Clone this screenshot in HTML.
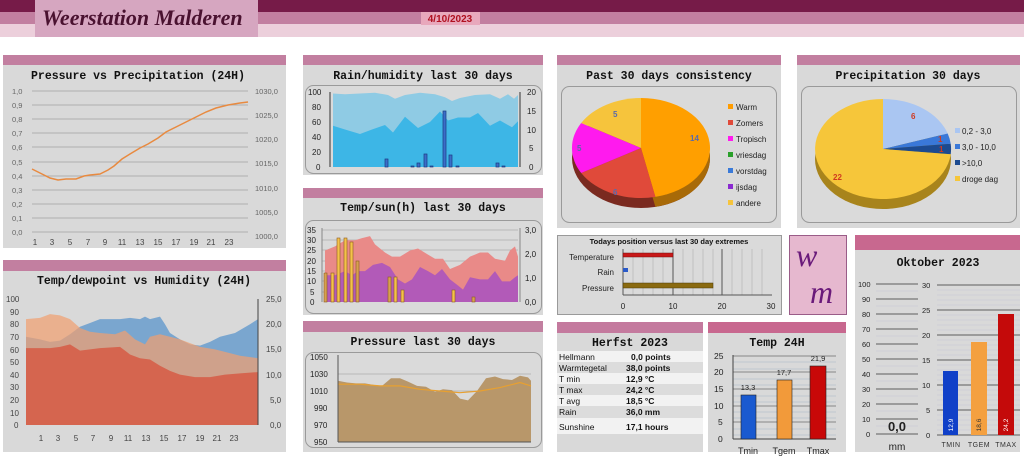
<!DOCTYPE html>
<html><head><meta charset="utf-8">
<style>
body{margin:0;width:1024px;height:456px;overflow:hidden;background:#fff;font-family:"Liberation Sans",sans-serif}
svg{position:absolute;left:0;top:0}
</style></head><body>
<svg width="1024" height="456" viewBox="0 0 1024 456" xmlns="http://www.w3.org/2000/svg" font-family="Liberation Sans, sans-serif">
<rect x="0" y="0" width="1024" height="12" fill="#761b48"/>
<rect x="0" y="12" width="1024" height="12" fill="#c27fa0"/>
<rect x="0" y="24" width="1024" height="13" fill="#eccfdb"/>
<rect x="35" y="0" width="223" height="37" fill="#d6a6c0"/>
<text x="42" y="25" font-family="Liberation Serif, serif" font-style="italic" font-weight="bold" font-size="22" fill="#4a1230">Weerstation Malderen</text>
<rect x="421" y="12" width="59" height="13" fill="#e8a8bc"/>
<text x="450" y="22" font-size="10" font-weight="bold" fill="#b01020" text-anchor="middle">4/10/2023</text>

<g font-family="Liberation Mono, monospace" font-weight="bold" font-size="11.5" fill="#111" text-anchor="middle">
<rect x="3" y="55" width="283" height="193" fill="#d9d9d9"/><rect x="3" y="55" width="283" height="10" fill="#c27fa0"/>
<text x="138" y="79">Pressure vs Precipitation (24H)</text>
<rect x="3" y="260" width="283" height="192" fill="#d9d9d9"/><rect x="3" y="260" width="283" height="11" fill="#c27fa0"/>
<text x="144" y="284">Temp/dewpoint vs Humidity (24H)</text>
<rect x="303" y="55" width="240" height="120" fill="#d9d9d9"/><rect x="303" y="55" width="240" height="10" fill="#c27fa0"/>
<text x="423" y="79">Rain/humidity last 30 days</text>
<rect x="303" y="188" width="240" height="127" fill="#d9d9d9"/><rect x="303" y="188" width="240" height="10" fill="#c27fa0"/>
<text x="423" y="211">Temp/sun(h) last 30 days</text>
<rect x="303" y="321" width="240" height="131" fill="#d9d9d9"/><rect x="303" y="321" width="240" height="11" fill="#c27fa0"/>
<text x="423" y="345">Pressure last 30 days</text>
<rect x="557" y="55" width="224" height="173" fill="#d9d9d9"/><rect x="557" y="55" width="224" height="10" fill="#c27fa0"/>
<text x="669" y="79">Past 30 days consistency</text>
<rect x="797" y="55" width="223" height="173" fill="#d9d9d9"/><rect x="797" y="55" width="223" height="10" fill="#c27fa0"/>
<text x="908" y="79">Precipitation 30 days</text>
<rect x="557" y="322" width="146" height="130" fill="#d9d9d9"/><rect x="557" y="322" width="146" height="11" fill="#c47a9e"/>
<text x="630" y="346">Herfst 2023</text>
<rect x="708" y="322" width="138" height="130" fill="#d9d9d9"/><rect x="708" y="322" width="138" height="11" fill="#c8688f"/>
<text x="777" y="346">Temp 24H</text>
<rect x="855" y="235" width="165" height="217" fill="#d9d9d9"/><rect x="855" y="235" width="165" height="15" fill="#c8688f"/>
<text x="938" y="266">Oktober 2023</text>
</g>

<g fill="#dadada" stroke="#9a9a9a" stroke-width="1">
<rect x="305.5" y="85.5" width="236" height="88" rx="8"/>
<rect x="305.5" y="220.5" width="236" height="93" rx="8"/>
<rect x="305.5" y="352.5" width="236" height="95" rx="8"/>
<rect x="561.5" y="86.5" width="215" height="136" rx="8"/>
<rect x="801.5" y="86.5" width="215" height="136" rx="8"/>
<rect x="557.5" y="235.5" width="224" height="79"/>
</g>
<rect x="789.5" y="235.5" width="57" height="79" fill="#e6b8cf" stroke="#9a5c88"/>
<text x="796" y="266" font-family="Liberation Serif, serif" font-style="italic" font-size="32" fill="#6a1a7a">w</text>
<text x="810" y="303" font-family="Liberation Serif, serif" font-style="italic" font-size="32" fill="#6a1a7a">m</text>

<!-- Panel 1 -->
<g stroke="#b0b0b0" stroke-width="1">
<line x1="32" y1="91" x2="248" y2="91"/><line x1="32" y1="105" x2="248" y2="105"/><line x1="32" y1="119" x2="248" y2="119"/><line x1="32" y1="133" x2="248" y2="133"/><line x1="32" y1="147" x2="248" y2="147"/><line x1="32" y1="162" x2="248" y2="162"/><line x1="32" y1="176" x2="248" y2="176"/><line x1="32" y1="190" x2="248" y2="190"/><line x1="32" y1="204" x2="248" y2="204"/><line x1="32" y1="218" x2="248" y2="218"/><line x1="32" y1="232" x2="248" y2="232"/>
</g>
<g font-size="7.5" fill="#666">
<text x="12" y="94">1,0</text><text x="12" y="108">0,9</text><text x="12" y="122">0,8</text><text x="12" y="136">0,7</text><text x="12" y="150">0,6</text><text x="12" y="165">0,5</text><text x="12" y="179">0,4</text><text x="12" y="193">0,3</text><text x="12" y="207">0,2</text><text x="12" y="221">0,1</text><text x="12" y="235">0,0</text>
<text x="255" y="94">1030,0</text><text x="255" y="118">1025,0</text><text x="255" y="142">1020,0</text><text x="255" y="166">1015,0</text><text x="255" y="191">1010,0</text><text x="255" y="215">1005,0</text><text x="255" y="239">1000,0</text>
</g>
<g font-size="8" fill="#444" text-anchor="middle">
<text x="35" y="245">1</text><text x="52" y="245">3</text><text x="70" y="245">5</text><text x="88" y="245">7</text><text x="105" y="245">9</text><text x="122" y="245">11</text><text x="140" y="245">13</text><text x="158" y="245">15</text><text x="176" y="245">17</text><text x="194" y="245">19</text><text x="211" y="245">21</text><text x="229" y="245">23</text>
</g>
<polyline fill="none" stroke="#e88a40" stroke-width="1.5" points="32,169 42,174 50,178 58,180 66,179 76,179 84,176 90,175 100,174 108,170 114,166 122,159 130,154 140,148 148,144 158,138 166,132 176,127 186,122 196,117 206,112 216,108 228,105 240,103 248,102"/>

<!-- Panel 5 -->
<g transform="translate(0,425) scale(1,-1.26)">
<polygon fill="#7aa6cf" points="26,0 26,70 40,68 50,66 60,67 70,72 80,78 90,81 100,84 110,84 120,84 130,85 140,84 145,86 150,84 160,86 165,80 170,73 180,68 190,64 200,63 210,66 220,70 235,73 250,80 258,84 258,0"/>
<polygon fill="#f0a070" fill-opacity="0.72" points="26,0 26,84 40,85 50,88 60,87 70,84 80,77 90,74 100,73 115,72 125,75 135,68 145,64 150,70 160,72 170,70 180,68 190,65 200,62 215,60 225,58 240,55 258,53 258,0"/>
<polygon fill="#d5654f" points="26,0 26,61 50,61 60,62 70,64 80,59 100,61 120,62 130,56 140,53 150,52 160,47 170,43 180,40 195,38 210,38 225,40 240,41 258,42 258,0"/>
</g>
<line x1="258" y1="299" x2="258" y2="425" stroke="#444"/>
<g font-size="8" fill="#444">
<text x="6" y="302">100</text><text x="10" y="315">90</text><text x="10" y="327">80</text><text x="10" y="340">70</text><text x="10" y="353">60</text><text x="10" y="365">50</text><text x="10" y="378">40</text><text x="10" y="390">30</text><text x="10" y="403">20</text><text x="10" y="416">10</text><text x="14" y="428">0</text>
<text x="266" y="302">25,0</text><text x="266" y="327">20,0</text><text x="266" y="352">15,0</text><text x="266" y="378">10,0</text><text x="270" y="403">5,0</text><text x="270" y="428">0,0</text>
</g>
<g font-size="8" fill="#444" text-anchor="middle">
<text x="41" y="441">1</text><text x="58" y="441">3</text><text x="76" y="441">5</text><text x="93" y="441">7</text><text x="111" y="441">9</text><text x="128" y="441">11</text><text x="146" y="441">13</text><text x="164" y="441">15</text><text x="182" y="441">17</text><text x="200" y="441">19</text><text x="217" y="441">21</text><text x="234" y="441">23</text>
</g>

<!-- Panel 2 -->
<g transform="translate(0,167) scale(1,-0.75)">
<polygon fill="#8fcbe4" points="333,0 333,98 345,97 360,98 375,99 388,96 395,91 405,96 420,99 435,97 445,93 452,88 460,92 475,96 490,97 500,91 508,97 514,91 518,96 518,0"/>
<polygon fill="#3db6e6" points="333,0 333,55 345,50 360,44 372,50 385,56 393,46 405,67 418,52 430,60 440,74 448,62 458,66 470,66 478,72 490,55 500,62 512,53 518,61 518,0"/>
</g>
<g fill="#3a6ec8" stroke="#1c3a80" stroke-width="0.7">
<rect x="385" y="159" width="3" height="8"/><rect x="411" y="166" width="3" height="1"/><rect x="417" y="163" width="3" height="4"/><rect x="424" y="154" width="3" height="13"/><rect x="430" y="166" width="3" height="1"/><rect x="443" y="111" width="3" height="56"/><rect x="449" y="155" width="3" height="12"/><rect x="456" y="166" width="3" height="1"/><rect x="496" y="163" width="3" height="4"/><rect x="502" y="166" width="3" height="1"/>
</g>
<line x1="330" y1="92" x2="330" y2="167" stroke="#333"/><line x1="520" y1="92" x2="520" y2="167" stroke="#333"/>
<g font-size="8" fill="#222">
<text x="308" y="95">100</text><text x="312" y="110">80</text><text x="312" y="125">60</text><text x="312" y="140">40</text><text x="312" y="155">20</text><text x="316" y="170">0</text>
<text x="527" y="95">20</text><text x="527" y="114">15</text><text x="527" y="133">10</text><text x="529" y="151">5</text><text x="529" y="170">0</text>
</g>

<!-- Panel 3 -->
<g stroke="#b8b8b8"><line x1="322" y1="230" x2="518" y2="230"/><line x1="322" y1="240" x2="518" y2="240"/><line x1="322" y1="250" x2="518" y2="250"/><line x1="322" y1="261" x2="518" y2="261"/><line x1="322" y1="271" x2="518" y2="271"/><line x1="322" y1="281" x2="518" y2="281"/><line x1="322" y1="292" x2="518" y2="292"/></g>
<g transform="translate(0,302) scale(1,-2.06)">
<polygon fill="#e98a88" points="325,0 325,25 335,27 345,30 355,30 362,31 370,32 375,28 385,24 392,22 400,22 410,25 418,26 428,23 435,21 443,21 450,16 460,18 470,22 480,24 488,24 495,21 505,20 510,25 515,27 518,22 518,0"/>
<polygon fill="#b25ab8" points="325,0 325,13 335,13 345,15 352,13 358,15 365,15 373,18 382,19 390,17 398,11 405,9 412,11 420,17 428,15 435,13 442,16 450,11 458,8 463,6 470,12 480,11 488,11 495,15 502,10 510,10 515,12 518,13 518,0"/>
</g>
<g fill="#f5c24a" stroke="#8a5a20" stroke-width="0.6">
<rect x="324" y="273" width="3" height="29" fill="#d8a050"/><rect x="331" y="273" width="3" height="29"/><rect x="337" y="238" width="3" height="64"/><rect x="344" y="238" width="3" height="64"/><rect x="350" y="242" width="3" height="60"/><rect x="356" y="261" width="3" height="41" fill="#d8a050"/><rect x="388" y="277" width="3" height="25" fill="#d8a050"/><rect x="394" y="277" width="3" height="25"/><rect x="401" y="290" width="3" height="12"/><rect x="452" y="290" width="3" height="12"/><rect x="472" y="297" width="3" height="5" fill="#d8a050"/>
</g>
<line x1="322" y1="228" x2="322" y2="302" stroke="#888"/><line x1="520" y1="228" x2="520" y2="302" stroke="#888"/>
<g font-size="8" fill="#222">
<text x="307" y="233">35</text><text x="307" y="243">30</text><text x="307" y="253">25</text><text x="307" y="264">20</text><text x="307" y="274">15</text><text x="307" y="284">10</text><text x="310" y="295">5</text><text x="310" y="305">0</text>
<text x="525" y="233">3,0</text><text x="525" y="257">2,0</text><text x="525" y="281">1,0</text><text x="525" y="305">0,0</text>
</g>

<!-- Panel 4 -->
<g stroke="#b8b8b8"><line x1="338" y1="374" x2="531" y2="374"/><line x1="338" y1="391" x2="531" y2="391"/><line x1="338" y1="408" x2="531" y2="408"/><line x1="338" y1="425" x2="531" y2="425"/></g>
<g transform="translate(0,442) scale(1,-0.85)">
<polygon fill="#b8976a" points="338,0 338,72 347,70 356,69 365,69 374,67 382,66 391,75 400,75 408,71 417,66 426,65 435,59 443,62 452,61 460,51 468,49 477,60 486,75 495,77 503,74 512,73 520,78 528,76 531,72 531,0"/>
<polyline fill="none" stroke="#e8a030" stroke-width="1.2" vector-effect="non-scaling-stroke" points="338,68 360,68 380,66 400,66 420,62 440,60 460,58 480,60 500,64 520,70 531,66"/>
</g>
<line x1="338" y1="355" x2="338" y2="442" stroke="#555"/><line x1="338" y1="442" x2="531" y2="442" stroke="#555"/>
<g font-size="8" fill="#222">
<text x="310" y="360">1050</text><text x="310" y="377">1030</text><text x="310" y="394">1010</text><text x="314" y="411">990</text><text x="314" y="428">970</text><text x="314" y="445">950</text>
</g>

<!-- Past 30 pie -->
<ellipse cx="641" cy="158" rx="69" ry="50" fill="#7a2a20"/>
<path d="M641,158 L641,108 A69,50 0 0 1 655.4,206.9 Z" fill="#a86a08"/>
<path d="M641,148 L641,98 A69,50 0 0 1 655.4,196.9 Z" fill="#ff9f00"/>
<path d="M641,148 L655.4,196.9 A69,50 0 0 1 581.2,173 Z" fill="#e04a3a"/>
<path d="M641,148 L581.2,173 A69,50 0 0 1 581.2,123 Z" fill="#ff1aee"/>
<path d="M641,148 L581.2,123 A69,50 0 0 1 641,98 Z" fill="#f6c43c"/>
<g font-size="8" font-weight="bold" fill="#5a6aaa">
<text x="613" y="117">5</text><text x="690" y="141">14</text><text x="577" y="151">5</text><text x="613" y="195">6</text>
</g>
<g font-size="8" fill="#222">
<rect x="728" y="104" width="5" height="5" fill="#ff9c00"/><text x="736" y="110">Warm</text>
<rect x="728" y="120" width="5" height="5" fill="#e04a3a"/><text x="736" y="126">Zomers</text>
<rect x="728" y="136" width="5" height="5" fill="#ff1aee"/><text x="736" y="142">Tropisch</text>
<rect x="728" y="152" width="5" height="5" fill="#2aa02a"/><text x="736" y="158">vriesdag</text>
<rect x="728" y="168" width="5" height="5" fill="#3a7ad8"/><text x="736" y="174">vorstdag</text>
<rect x="728" y="184" width="5" height="5" fill="#8a2ad0"/><text x="736" y="190">ijsdag</text>
<rect x="728" y="200" width="5" height="5" fill="#f6c43c"/><text x="736" y="206">andere</text>
</g>

<!-- Precip pie -->
<ellipse cx="883" cy="159" rx="68" ry="50" fill="#a8841c"/>
<path d="M883,149 L883,99 A68,50 0 0 1 947.7,133.5 Z" fill="#aac6f2"/>
<path d="M883,149 L947.7,133.5 A68,50 0 0 1 950.7,143.8 Z" fill="#3a78d8"/>
<path d="M883,149 L950.7,143.8 A68,50 0 0 1 950.7,154.2 Z" fill="#1c4a90"/>
<path d="M883,149 L950.7,154.2 A68,50 0 1 1 883,99 Z" fill="#f6c63a"/>
<g font-size="8" font-weight="bold" fill="#d03a20">
<text x="911" y="119">6</text><text x="938" y="142">1</text><text x="939" y="152">1</text><text x="833" y="180">22</text>
</g>
<g font-size="8" fill="#222">
<rect x="955" y="128" width="5" height="5" fill="#aac6f2"/><text x="962" y="134">0,2 - 3,0</text>
<rect x="955" y="144" width="5" height="5" fill="#3a78d8"/><text x="962" y="150">3,0 - 10,0</text>
<rect x="955" y="160" width="5" height="5" fill="#1c4a90"/><text x="962" y="166">&gt;10,0</text>
<rect x="955" y="176" width="5" height="5" fill="#f6c63a"/><text x="962" y="182">droge dag</text>
</g>

<!-- Todays -->
<text x="669" y="244" font-size="7.5" font-weight="bold" fill="#111" text-anchor="middle">Todays position versus last 30 day extremes</text>
<g stroke="#c0c0c0"><line x1="633" y1="249" x2="633" y2="295"/><line x1="643" y1="249" x2="643" y2="295"/><line x1="653" y1="249" x2="653" y2="295"/><line x1="663" y1="249" x2="663" y2="295"/><line x1="683" y1="249" x2="683" y2="295"/><line x1="693" y1="249" x2="693" y2="295"/><line x1="703" y1="249" x2="703" y2="295"/><line x1="713" y1="249" x2="713" y2="295"/><line x1="732" y1="249" x2="732" y2="295"/><line x1="742" y1="249" x2="742" y2="295"/><line x1="752" y1="249" x2="752" y2="295"/><line x1="762" y1="249" x2="762" y2="295"/></g>
<g stroke="#555"><line x1="623" y1="249" x2="623" y2="295"/><line x1="673" y1="249" x2="673" y2="295"/><line x1="722" y1="249" x2="722" y2="295"/><line x1="623" y1="295" x2="772" y2="295"/></g>
<rect x="623" y="253" width="50" height="4" fill="#c81818" stroke="#701010" stroke-width="0.5"/>
<rect x="623" y="268" width="5" height="4" fill="#2a5ac8"/>
<rect x="623" y="283" width="90" height="5" fill="#8a6a10" stroke="#4a3a08" stroke-width="0.5"/>
<g font-size="8" fill="#222" text-anchor="end"><text x="614" y="260">Temperature</text><text x="614" y="275">Rain</text><text x="614" y="291">Pressure</text></g>
<g font-size="8" fill="#222" text-anchor="middle"><text x="623" y="309">0</text><text x="673" y="309">10</text><text x="722" y="309">20</text><text x="771" y="309">30</text></g>

<!-- Herfst -->
<rect x="557" y="351" width="146" height="11" fill="#f2f2f2"/><rect x="557" y="362" width="146" height="11" fill="#dcdcdc"/><rect x="557" y="373" width="146" height="11" fill="#f2f2f2"/><rect x="557" y="384" width="146" height="11" fill="#dcdcdc"/><rect x="557" y="395" width="146" height="11" fill="#f2f2f2"/><rect x="557" y="406" width="146" height="12" fill="#dcdcdc"/><rect x="557" y="418" width="146" height="16" fill="#f2f2f2"/>
<g font-size="8.5" fill="#111">
<text x="559" y="360">Hellmann</text><text x="559" y="371">Warmtegetal</text><text x="559" y="382">T min</text><text x="559" y="393">T max</text><text x="559" y="404">T avg</text><text x="559" y="415">Rain</text><text x="559" y="430">Sunshine</text>
</g>
<g font-size="8.5" font-weight="bold" fill="#111">
<text x="631" y="360">0,0 points</text><text x="626" y="371">38,0 points</text><text x="626" y="382">12,9 °C</text><text x="626" y="393">24,2 °C</text><text x="626" y="404">18,5 °C</text><text x="626" y="415">36,0 mm</text><text x="626" y="430">17,1 hours</text>
</g>

<!-- Temp 24H -->
<g stroke="#a8b4c8" stroke-width="0.6">
<line x1="733" y1="362" x2="836" y2="362"/><line x1="733" y1="369" x2="836" y2="369"/><line x1="733" y1="379" x2="836" y2="379"/><line x1="733" y1="385" x2="836" y2="385"/><line x1="733" y1="396" x2="836" y2="396"/><line x1="733" y1="402" x2="836" y2="402"/><line x1="733" y1="412" x2="836" y2="412"/><line x1="733" y1="418" x2="836" y2="418"/><line x1="733" y1="429" x2="836" y2="429"/><line x1="733" y1="435" x2="836" y2="435"/>
</g>
<g stroke="#888"><line x1="733" y1="356" x2="836" y2="356"/><line x1="733" y1="372" x2="836" y2="372"/><line x1="733" y1="389" x2="836" y2="389"/><line x1="733" y1="406" x2="836" y2="406"/><line x1="733" y1="422" x2="836" y2="422"/></g>
<line x1="733" y1="355" x2="733" y2="439" stroke="#444"/><line x1="733" y1="439" x2="836" y2="439" stroke="#444"/>
<rect x="741" y="395" width="15" height="44" fill="#1a5ad0" stroke="#222" stroke-width="0.6"/>
<rect x="777" y="380" width="15" height="59" fill="#f29a3a" stroke="#222" stroke-width="0.6"/>
<rect x="810" y="366" width="16" height="73" fill="#c80808" stroke="#222" stroke-width="0.6"/>
<g font-size="7.5" fill="#222" text-anchor="middle"><text x="748" y="390">13,3</text><text x="784" y="375">17,7</text><text x="818" y="361">21,9</text></g>
<g font-size="8.5" fill="#222"><text x="714" y="359">25</text><text x="714" y="375">20</text><text x="714" y="392">15</text><text x="714" y="409">10</text><text x="718" y="425">5</text><text x="718" y="442">0</text></g>
<g font-size="9" fill="#222" text-anchor="middle"><text x="748" y="454">Tmin</text><text x="784" y="454">Tgem</text><text x="818" y="454">Tmax</text></g>

<!-- Oktober -->
<g stroke="#c4c8d4" stroke-width="0.6">
<line x1="876" y1="291" x2="918" y2="291"/><line x1="876" y1="306" x2="918" y2="306"/><line x1="876" y1="321" x2="918" y2="321"/><line x1="876" y1="336" x2="918" y2="336"/><line x1="876" y1="351" x2="918" y2="351"/><line x1="876" y1="366" x2="918" y2="366"/><line x1="876" y1="381" x2="918" y2="381"/><line x1="876" y1="396" x2="918" y2="396"/><line x1="876" y1="411" x2="918" y2="411"/><line x1="876" y1="426" x2="918" y2="426"/>
<line x1="937" y1="290" x2="1020" y2="290"/><line x1="937" y1="295" x2="1020" y2="295"/><line x1="937" y1="300" x2="1020" y2="300"/><line x1="937" y1="305" x2="1020" y2="305"/><line x1="937" y1="315" x2="1020" y2="315"/><line x1="937" y1="320" x2="1020" y2="320"/><line x1="937" y1="325" x2="1020" y2="325"/><line x1="937" y1="330" x2="1020" y2="330"/><line x1="937" y1="340" x2="1020" y2="340"/><line x1="937" y1="345" x2="1020" y2="345"/><line x1="937" y1="350" x2="1020" y2="350"/><line x1="937" y1="355" x2="1020" y2="355"/><line x1="937" y1="365" x2="1020" y2="365"/><line x1="937" y1="370" x2="1020" y2="370"/><line x1="937" y1="375" x2="1020" y2="375"/><line x1="937" y1="380" x2="1020" y2="380"/><line x1="937" y1="390" x2="1020" y2="390"/><line x1="937" y1="395" x2="1020" y2="395"/><line x1="937" y1="400" x2="1020" y2="400"/><line x1="937" y1="405" x2="1020" y2="405"/><line x1="937" y1="415" x2="1020" y2="415"/><line x1="937" y1="420" x2="1020" y2="420"/><line x1="937" y1="425" x2="1020" y2="425"/><line x1="937" y1="430" x2="1020" y2="430"/>
</g>
<g stroke="#333" stroke-width="0.8">
<line x1="876" y1="284" x2="918" y2="284"/><line x1="876" y1="299" x2="918" y2="299"/><line x1="876" y1="314" x2="918" y2="314"/><line x1="876" y1="329" x2="918" y2="329"/><line x1="876" y1="344" x2="918" y2="344"/><line x1="876" y1="359" x2="918" y2="359"/><line x1="876" y1="374" x2="918" y2="374"/><line x1="876" y1="389" x2="918" y2="389"/><line x1="876" y1="404" x2="918" y2="404"/><line x1="876" y1="419" x2="918" y2="419"/><line x1="876" y1="434" x2="918" y2="434"/>
<line x1="937" y1="285" x2="1020" y2="285"/><line x1="937" y1="310" x2="1020" y2="310"/><line x1="937" y1="335" x2="1020" y2="335"/><line x1="937" y1="360" x2="1020" y2="360"/><line x1="937" y1="385" x2="1020" y2="385"/><line x1="937" y1="410" x2="1020" y2="410"/><line x1="937" y1="435" x2="1020" y2="435"/>
</g>
<g font-size="7.5" fill="#222">
<text x="858" y="287">100</text><text x="862" y="302">90</text><text x="862" y="317">80</text><text x="862" y="332">70</text><text x="862" y="347">60</text><text x="862" y="362">50</text><text x="862" y="377">40</text><text x="862" y="392">30</text><text x="862" y="407">20</text><text x="862" y="422">10</text><text x="866" y="437">0</text>
<text x="922" y="288">30</text><text x="922" y="313">25</text><text x="922" y="338">20</text><text x="922" y="363">15</text><text x="922" y="388">10</text><text x="926" y="413">5</text><text x="926" y="438">0</text>
</g>
<rect x="943" y="371" width="15" height="64" fill="#1040c8"/>
<rect x="971" y="342" width="16" height="93" fill="#f4a040"/>
<rect x="998" y="314" width="16" height="121" fill="#c40a0a"/>
<g font-size="6.5" fill="#fff" text-anchor="middle">
<text transform="translate(953,425) rotate(-90)">12,9</text><text transform="translate(981,425) rotate(-90)" fill="#333">18,6</text><text transform="translate(1008,425) rotate(-90)">24,2</text>
</g>
<text x="897" y="431" font-size="13" font-weight="bold" fill="#222" text-anchor="middle">0,0</text>
<text x="897" y="450" font-size="10" fill="#222" text-anchor="middle">mm</text>
<g font-size="7" fill="#333" text-anchor="middle" letter-spacing="0.5"><text x="951" y="447">TMIN</text><text x="979" y="447">TGEM</text><text x="1006" y="447">TMAX</text></g>
</svg>
</body></html>
